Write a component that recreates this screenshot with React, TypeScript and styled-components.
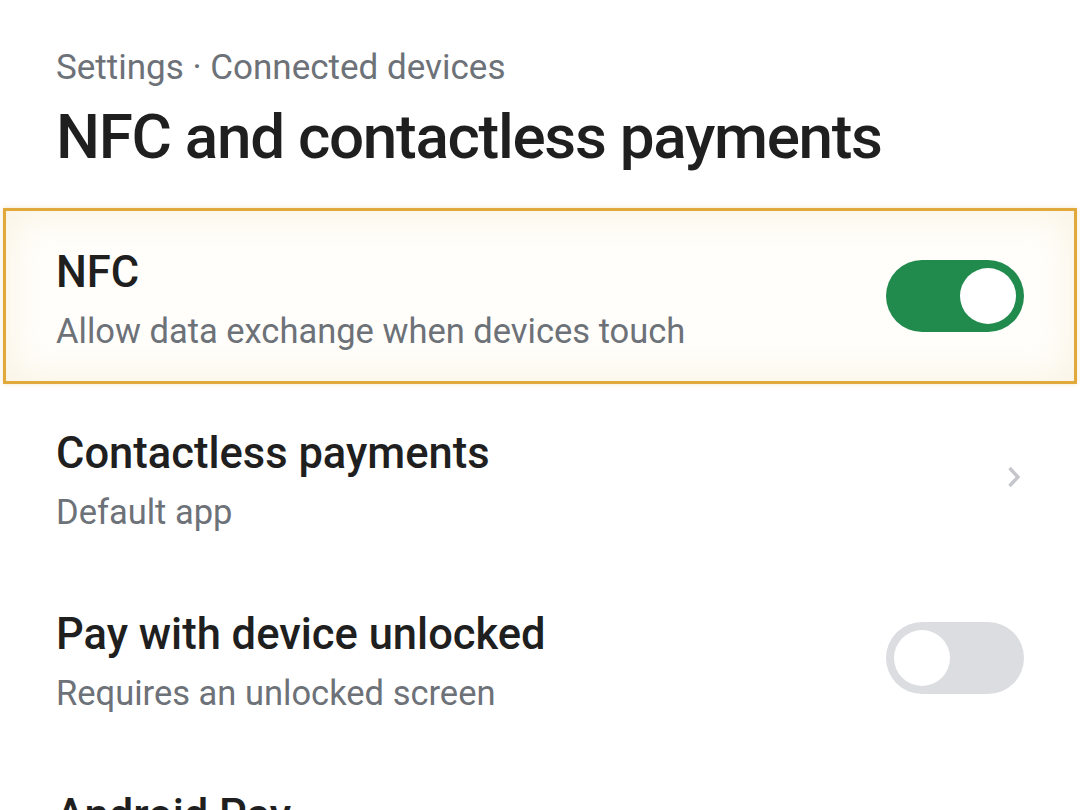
import * as React from 'react'
import styled, { createGlobalStyle } from 'styled-components'

const GlobalStyle = createGlobalStyle`
  html, body {
    margin: 0;
    padding: 0;
    background: #ffffff;
  }
  body {
    font-family: Roboto, "Noto Sans", "Liberation Sans", sans-serif;
    -webkit-font-smoothing: antialiased;
  }
`

const Page = styled.div`
  width: 1080px;
  height: 810px;
  overflow: hidden;
  background: #ffffff;
`

const Header = styled.header`
  padding: 47px 56px 0;
  height: 208px;
  box-sizing: border-box;
`

const Crumb = styled.div`
  font-size: 35px;
  line-height: 42px;
  color: #6d7178;
  font-weight: 400;
`

const Title = styled.h1`
  margin: 12px 0 0;
  font-size: 62px;
  line-height: 72px;
  font-weight: 500;
  color: #1f1f1f;
  letter-spacing: -1.3px;
`

const List = styled.div`
  display: flex;
  flex-direction: column;
  gap: 5px;
`

const Row = styled.div<{ $focused?: boolean }>`
  display: flex;
  align-items: center;
  justify-content: space-between;
  margin: 0 3px;
  padding: 0 50px;
  height: 176px;
  flex-shrink: 0;
  box-sizing: border-box;
  border: 3px solid ${p => (p.$focused ? '#e1a93b' : 'transparent')};
  background: ${p => (p.$focused ? '#fffefb' : 'transparent')};
  box-shadow: ${p =>
    p.$focused
      ? 'inset 0 0 40px rgba(240, 222, 180, 0.4), 0 0 5px rgba(240, 225, 190, 0.8)'
      : 'none'};
`

const Texts = styled.div`
  display: flex;
  flex-direction: column;
  gap: 11px;
  margin-top: 7px;
`

const RowTitle = styled.div`
  font-size: 43.5px;
  line-height: 52px;
  font-weight: 500;
  color: #1f1f1f;
`

const RowSub = styled.div`
  font-size: 34.5px;
  line-height: 42px;
  color: #6d7178;
`

const Track = styled.div<{ $on: boolean }>`
  width: 138px;
  height: 72px;
  border-radius: 36px;
  background: ${p => (p.$on ? '#218a4d' : '#dcdde1')};
  display: flex;
  align-items: center;
  justify-content: ${p => (p.$on ? 'flex-end' : 'flex-start')};
  padding: 0 8px;
  box-sizing: border-box;
  flex-shrink: 0;
`

const Knob = styled.div`
  width: 56px;
  height: 56px;
  border-radius: 50%;
  background: #ffffff;
`

const Chevron = styled.svg`
  width: 14px;
  height: 22px;
  margin-right: 3px;
  flex-shrink: 0;
`

const Toggle = ({ on }: { on: boolean }) => (
  <Track $on={on}>
    <Knob />
  </Track>
)

export default function App() {
  return (
    <Page>
      <GlobalStyle />
      <Header>
        <Crumb>Settings · Connected devices</Crumb>
        <Title>NFC and contactless payments</Title>
      </Header>
      <List>
        <Row $focused>
          <Texts>
            <RowTitle>NFC</RowTitle>
            <RowSub>Allow data exchange when devices touch</RowSub>
          </Texts>
          <Toggle on />
        </Row>
        <Row>
          <Texts>
            <RowTitle>Contactless payments</RowTitle>
            <RowSub>Default app</RowSub>
          </Texts>
          <Chevron viewBox="0 0 14 22">
            <path d="M2.5 2 L11 11 L2.5 20" fill="none" stroke="#c4c6cc" strokeWidth="3.4" />
          </Chevron>
        </Row>
        <Row>
          <Texts>
            <RowTitle>Pay with device unlocked</RowTitle>
            <RowSub>Requires an unlocked screen</RowSub>
          </Texts>
          <Toggle on={false} />
        </Row>
        <Row>
          <Texts>
            <RowTitle>Android Pay</RowTitle>
            <RowSub>Manage cards</RowSub>
          </Texts>
        </Row>
      </List>
    </Page>
  )
}
